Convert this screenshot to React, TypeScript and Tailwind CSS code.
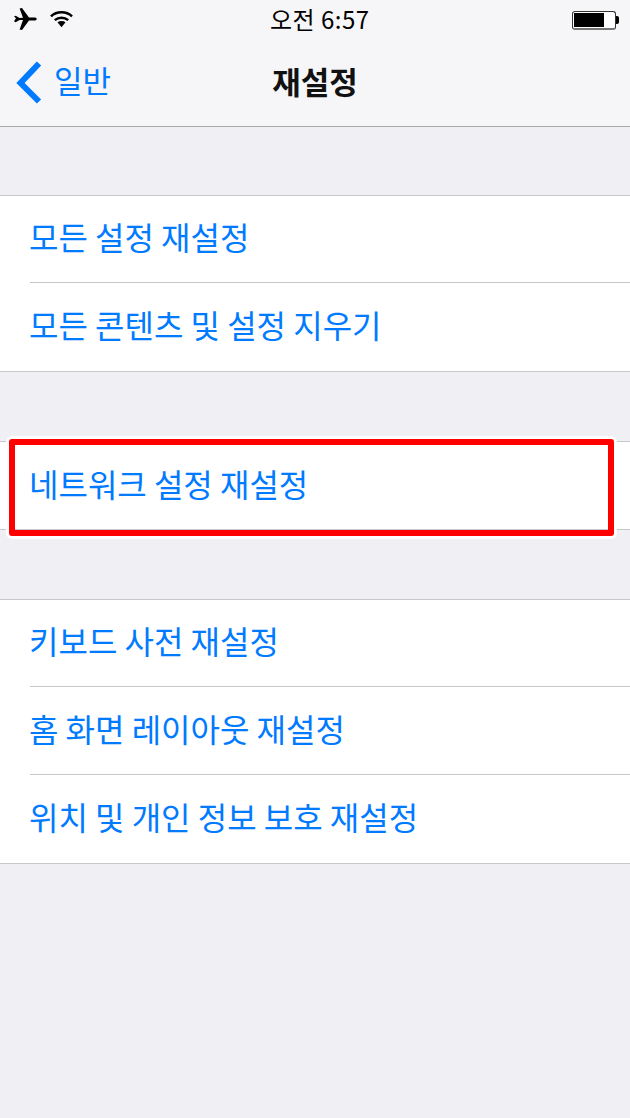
import React from "react";

const font = "font-['Noto_Sans_CJK_KR','Noto_Sans',sans-serif]";

function Group({ labels }: { labels: string[] }) {
  return (
    <div className="bg-white border-y border-[#c8c7cc]">
      {labels.map((label, i) => (
        <div key={label} className="pl-[30px]">
          <div
            className={`flex items-center text-[32px] text-[#007aff] pb-[6px] ${i === 0 ? "h-[87px]" : "h-[88px]"} ${
              i === labels.length - 1 ? "" : "border-b border-[#c8c7cc]"
            }`}
          >
            <span className="-ml-[1px]">{label}</span>
          </div>
        </div>
      ))}
    </div>
  );
}

export default function App() {
  return (
    <div className={`w-[630px] h-[1118px] bg-[#efeff4] relative overflow-hidden ${font}`}>
      <div className="h-[127px] bg-[#f6f6f8] border-b border-[#a9a9ac] relative">
        <div className="h-[40px] flex items-center justify-between pl-[13px] pr-[11px] relative">
          <div className="flex items-center gap-[13px] mb-[2px]">
            <svg width="24" height="22" viewBox="0 0 24 22" className="text-black">
              <path fill="currentColor" d="M1 8.6l1.6-.9 4 2.2 3.4-.1L6.6 0.6 9 0l7 9.6 5.2-.1c1.5 0 2.6.7 2.6 1.5s-1.1 1.5-2.6 1.5l-5.2-.1L9 22l-2.4-.6 3.4-9.3-3.4-.1-4 2.2-1.6-.9 2-3.1z" />
            </svg>
            <svg width="23" height="18" viewBox="0 0 24 18" className="text-black mb-[1px]">
              <path fill="none" stroke="currentColor" strokeWidth="2.6" d="M1 6.2c6-5.6 16-5.6 22 0" />
              <path fill="none" stroke="currentColor" strokeWidth="2.6" d="M5 10.2c4-3.4 10-3.4 14 0" />
              <path fill="currentColor" d="M7.8 12.4c2.4-1.6 6-1.6 8.4 0L12 17.6z" />
            </svg>
          </div>
          <div className="absolute left-[270px] top-[3px] text-[24px] tracking-[0.5px] leading-[32px] text-black">오전 6:57</div>
          <div className="flex items-center">
            <div className="w-[44px] h-[19px] rounded-[3px] border border-[#333] border-b-2 border-b-[#777] bg-white p-[1px]">
              <div className="w-[30px] h-full bg-black" />
            </div>
            <div className="w-[3px] h-[8px] bg-black rounded-r-[2px]" />
          </div>
        </div>
        <div className="h-[86px] flex items-center relative">
          <svg width="30" height="44" viewBox="0 0 30 44" className="ml-[15px] text-[#007aff]">
            <path fill="none" stroke="currentColor" strokeWidth="6" d="M24 2.5L5.5 22 24 40.5" />
          </svg>
          <span className="ml-[9px] mb-[5px] text-[31px] text-[#007aff]">일반</span>
          <div className="absolute inset-0 flex items-center justify-center pb-[4px] text-[31px] font-bold text-[#111]">
            재설정
          </div>
        </div>
      </div>

      <div className="flex flex-col gap-[69px] pt-[68px]">
        <Group labels={["모든 설정 재설정", "모든 콘텐츠 및 설정 지우기"]} />
        <Group labels={["네트워크 설정 재설정"]} />
        <Group labels={["키보드 사전 재설정", "홈 화면 레이아웃 재설정", "위치 및 개인 정보 보호 재설정"]} />
      </div>

      {/* highlight drawn over the row */}
      <div className="absolute left-[9px] top-[439px] w-[605px] h-[97px] border-[6px] border-[#ff0000] rounded-[3px] shadow-[0_0_0_3px_#ffffff]" />
    </div>
  );
}
